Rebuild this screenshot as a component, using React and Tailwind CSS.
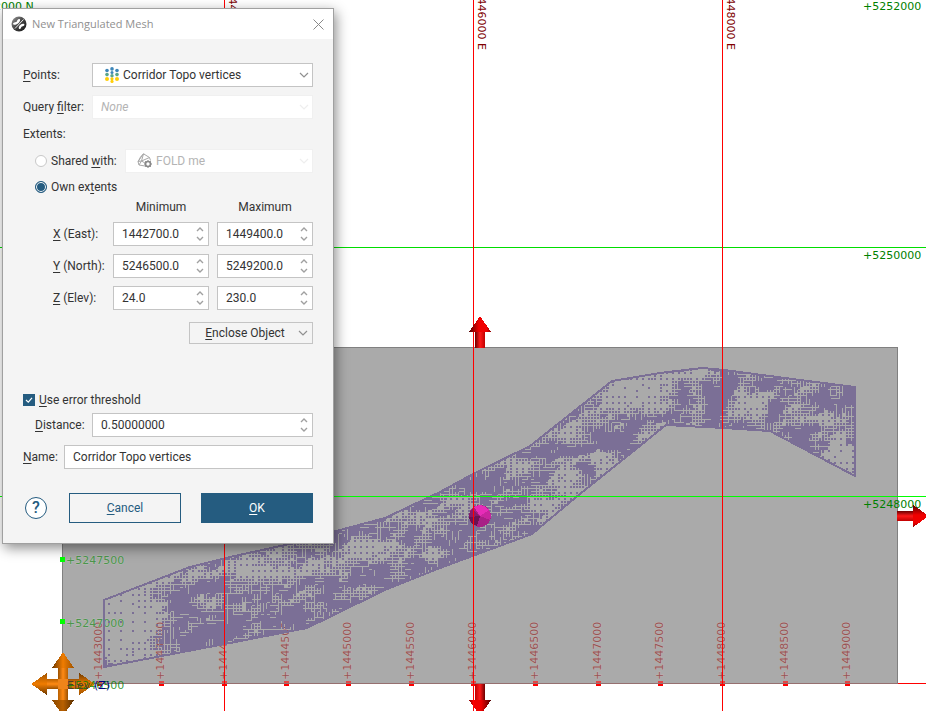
import { useId, useState } from 'react';

const EASTINGS = [1443000, 1443500, 1444000, 1444500, 1445000, 1445500, 1446000, 1446500, 1447000, 1447500, 1448000, 1448500, 1449000];

const CORRIDOR =
  '104,600 190,567 230,557 285,545 340,530 385,518 440,492 473,474 530,446 612,381 660,373 702,368 724,370 800,380 855,387 855,476 770,431 724,428 666,425 575,498 532,534 440,568 385,590 307,628 230,643 104,667';

// survey density: [cx, cy, rx, ry, weight], negative is sparse
const DENSITY = [
  [122, 625, 38, 60, -1.6],
  [105, 664, 7, 10, 1.6],
  [172, 575, 16, 12, -0.6],
  [200, 584, 28, 7, 0.9],
  [175, 603, 14, 15, 0.8],
  [190, 625, 26, 16, 0.7],
  [180, 643, 22, 9, 0.8],
  [215, 603, 18, 8, -0.5],
  [225, 635, 30, 9, 0.7],
  [250, 568, 22, 12, -1.1],
  [262, 588, 24, 7, 0.6],
  [238, 600, 14, 8, -0.5],
  [285, 618, 40, 12, 0.5],
  [300, 572, 42, 6, -0.5],
  [318, 560, 30, 5, -0.3],
  [366, 548, 22, 8, -1],
  [395, 548, 22, 6, -0.5],
  [340, 600, 50, 14, 0.5],
  [350, 532, 34, 9, 0.7],
  [425, 532, 12, 16, -0.9],
  [410, 572, 50, 12, 0.5],
  [440, 510, 24, 8, 0.1],
  [460, 530, 34, 16, 0.5],
  [490, 486, 36, 8, 0.7],
  [520, 465, 14, 8, -0.7],
  [543, 502, 18, 14, -0.7],
  [567, 484, 16, 18, -1],
  [500, 515, 24, 12, 0.4],
  [575, 428, 14, 10, -0.9],
  [550, 448, 30, 9, 0.8],
  [578, 447, 24, 6, 0.7],
  [600, 460, 10, 14, -1],
  [598, 435, 16, 7, 0.9],
  [618, 446, 22, 6, 0.8],
  [588, 472, 8, 14, 0.6],
  [635, 392, 38, 20, -1.5],
  [635, 424, 9, 14, 0.8],
  [660, 416, 26, 5, 0.9],
  [650, 436, 14, 7, -0.4],
  [690, 374, 30, 5, -1],
  [682, 400, 9, 20, 0.9],
  [697, 405, 8, 14, -0.4],
  [712, 400, 8, 22, 0.9],
  [728, 385, 12, 9, 0.6],
  [748, 405, 14, 22, -1.2],
  [768, 382, 26, 6, 0.8],
  [776, 408, 7, 14, 0.9],
  [796, 402, 11, 14, -0.9],
  [730, 423, 20, 4, 0.8],
  [825, 398, 36, 9, 0.8],
  [830, 416, 28, 5, -0.5],
  [815, 428, 44, 4, 0.5],
  [805, 442, 24, 8, 0.4],
  [850, 410, 6, 30, 0.5],
  [840, 458, 20, 20, -1.5],
];

function hash(x, y) {
  const s = Math.sin(x * 127.1 + y * 311.7) * 43758.5453;
  return s - Math.floor(s);
}

function noise(x, y) {
  const xi = Math.floor(x);
  const yi = Math.floor(y);
  const fx = x - xi;
  const fy = y - yi;
  const top = hash(xi, yi) * (1 - fx) + hash(xi + 1, yi) * fx;
  const bottom = hash(xi, yi + 1) * (1 - fx) + hash(xi + 1, yi + 1) * fx;
  return top * (1 - fy) + bottom * fy;
}

function buildPoints() {
  let d = '';
  for (let y = 366; y < 669; y += 3) {
    for (let x = 102; x < 857; x += 3) {
      let v = 0.24 + (noise(x / 11, (y + x * 0.35) / 6) - 0.5) * 1.5;
      for (const [cx, cy, rx, ry, w] of DENSITY) {
        const r = ((x - cx) / rx) ** 2 + ((y - cy) / ry) ** 2;
        if (r < 3) v += w * 0.85 * Math.exp(-r);
      }
      const i = x / 3;
      const j = y / 3;
      if (v < -0.75) {
        if (i % 4 === 0 && j % 3 === 0) d += `M${x} ${y}h2v2h-2z`;
      } else if (v < -0.2) {
        if (i % 2 === 0 && j % 2 === 0) d += `M${x} ${y}h2v2h-2z`;
      } else if (v < 0.1) {
        d += i % 2 === 0 || hash(i, j) > 0.5 ? `M${x} ${y}h2v2h-2z` : '';
      } else {
        // solid area with short gaps between the cells
        const limit = 0.85 - v;
        const gapRight = hash(Math.floor(i), Math.floor(j / 3) + 50) < limit;
        const gapBelow = hash(Math.floor(i / 3) + 90, Math.floor(j)) < limit;
        d += `M${x} ${y}h${gapRight ? 2 : 3}v${gapBelow ? 2 : 3}h${gapRight ? -2 : -3}z`;
      }
    }
  }
  return d;
}

const POINTS = buildPoints();

function RedArrow({ transform }) {
  return (
    <g transform={transform}>
      <rect x="-5" y="-17" width="10" height="17" fill="url(#redShaft)" />
      <path d="M0 -32L11 -16H-11z" fill="url(#redHead)" />
    </g>
  );
}

function OrangeArrow({ transform }) {
  return (
    <g transform={transform}>
      <rect x="-5" y="-17" width="10" height="17" fill="url(#orangeShaft)" />
      <path d="M0 -32L11 -16H-11z" fill="url(#orangeHead)" />
    </g>
  );
}

function Scene() {
  return (
    <svg
      className="block h-full w-full font-['DejaVu_Sans'] text-[11px]"
      viewBox="0 0 926 711"
      preserveAspectRatio="xMinYMin slice"
      shapeRendering="crispEdges"
    >
      <defs>
        <clipPath id="corridor">
          <polygon points={CORRIDOR} />
        </clipPath>
        <linearGradient id="redShaft">
          <stop offset="0" stopColor="#6a0000" />
          <stop offset="0.5" stopColor="#ff1a1a" />
          <stop offset="1" stopColor="#c00000" />
        </linearGradient>
        <linearGradient id="redHead">
          <stop offset="0" stopColor="#500000" />
          <stop offset="0.45" stopColor="#f00000" />
          <stop offset="0.8" stopColor="#f00000" />
          <stop offset="1" stopColor="#900000" />
        </linearGradient>
        <linearGradient id="orangeShaft">
          <stop offset="0" stopColor="#9a5000" />
          <stop offset="0.5" stopColor="#ff8a14" />
          <stop offset="1" stopColor="#b86000" />
        </linearGradient>
        <linearGradient id="orangeHead">
          <stop offset="0" stopColor="#6b3800" />
          <stop offset="0.5" stopColor="#f07c00" />
          <stop offset="1" stopColor="#a05400" />
        </linearGradient>
        <linearGradient id="orangeHeadDark">
          <stop offset="0" stopColor="#8a4800" />
          <stop offset="0.5" stopColor="#b86000" />
          <stop offset="1" stopColor="#5a3000" />
        </linearGradient>
      </defs>

      <rect x="62" y="347" width="836" height="337" fill="#aaaaaa" />
      <path d="M62.500 684V347.500H897.500V684" fill="none" stroke="#808080" />

      {/* easting labels and ticks along the bottom edge, the corridor lies over them */}
      {EASTINGS.map((value, i) => {
        const x = Math.round(99 + i * 62.33);
        return (
          <g key={value}>
            <text
              transform={`translate(${x + 3} 680) rotate(-90)`}
              fill="#985454"
              stroke="#d0b4b4"
              strokeWidth="1"
              strokeOpacity="0.6"
              paintOrder="stroke"
            >
              +{value}
            </text>
            <rect x={x - 2} y="681" width="5" height="3" fill="#e04848" />
            <rect x={x - 2} y="684" width="5" height="2" fill="#ff0000" />
          </g>
        );
      })}
      <path d="M62 683.500H898" stroke="#967070" />
      <path d="M898 683.500H2000" stroke="#ff0000" />

      <g fill="#4c944c" stroke="#c0d4c0" strokeWidth="1" strokeOpacity="0.5" paintOrder="stroke">
        <text x="66" y="564">+5247500</text>
        <text x="66" y="627">+5247000</text>
      </g>
      <path d="M60 557h5v5h-5zM60 619h5v5h-5z" fill="#00ff00" />

      <g clipPath="url(#corridor)">
        <path d={POINTS} fill="#7b6f96" />
      </g>
      <polygon points={CORRIDOR} fill="none" stroke="#7b6f96" strokeWidth="2" />

      {/* grid */}
      <path d="M0 247.500H2000" stroke="#00dd00" />
      <path d="M0 496.500H2000" stroke="#00ff00" />
      <path d="M224.500 0V711M473.500 0V711M722.500 0V711" stroke="#ff0000" />
      <g fill="#008000">
        <text x="863" y="10">+5252000</text>
        <text x="863" y="259">+5250000</text>
        <text x="863" y="508">+5248000</text>
        <text x="-27" y="10">5252000 N</text>
        <text x="-51" y="259">5250000 N</text>
        <text x="-51" y="508">5248000 N</text>
      </g>
      <g fill="#800000">
        <text textAnchor="end" transform="translate(229 50) rotate(90)">1444000 E</text>
        <text textAnchor="end" transform="translate(478 50) rotate(90)">1446000 E</text>
        <text textAnchor="end" transform="translate(727 50) rotate(90)">1448000 E</text>
      </g>

      {/* drag handles */}
      <RedArrow transform="translate(480 348)" />
      <RedArrow transform="translate(480 684) rotate(180)" />
      <RedArrow transform="translate(897 516) rotate(90)" />
      <g>
        <circle cx="480" cy="516" r="11" fill="#a81f86" />
        <path d="M480 516L474 507A11 11 0 0 1 489 510z" fill="#e62cb8" />
        <path d="M480 516L489 510A11 11 0 0 1 490 520z" fill="#c8259f" />
        <path d="M480 516L469 517A11 11 0 0 0 477 526z" fill="#6a1254" />
        <path d="M480 516L472 509A11 11 0 0 0 469 517z" fill="#861a6b" />
      </g>
      <path d="M473.500 496V711" stroke="#ff0000" />
      <OrangeArrow transform="translate(63 684) rotate(-90)" />
      <OrangeArrow transform="translate(63 684) rotate(90)" />
      <OrangeArrow transform="translate(63 684) rotate(180)" />
      <path d="M52 700H74L63 716z" fill="url(#orangeHeadDark)" />
      <OrangeArrow transform="translate(63 684)" />
      <rect x="58" y="679" width="10" height="10" fill="#f0841a" />
      <text x="66" y="689" fill="#008000" fillOpacity="0.8">+5246500</text>
      <text x="67" y="689" fill="#503c28">Elev</text>
      <text x="94" y="689" fill="#000080">(Z)</text>
    </svg>
  );
}

function Chevron({ className = 'text-[#909090]' }) {
  return (
    <svg className={`pointer-events-none absolute top-1/2 right-1 -translate-y-1/2 ${className}`} width="10" height="6" viewBox="0 0 10 6">
      <path d="M1 1L5 5L9 1" fill="none" stroke="currentColor" strokeWidth="1.2" />
    </svg>
  );
}

function SpinBox({ label, value, className, id }) {
  const [text, setText] = useState(value);

  const step = (amount) => {
    const digits = (text.split('.')[1] || '').length;
    setText((parseFloat(text) + amount).toFixed(digits));
  };

  return (
    <div className={`flex h-6 border border-[#c4c4c4] bg-white ${className}`}>
      <input
        id={id}
        aria-label={label}
        value={text}
        onChange={(e) => setText(e.target.value)}
        className="w-full min-w-0 flex-1 pl-2 outline-none"
      />
      <div className="flex w-4 flex-col items-center justify-center gap-1 text-[#a0a0a0]">
        <button type="button" aria-label="Increase" onClick={() => step(1)}>
          <svg width="8" height="5" viewBox="0 0 8 5">
            <path d="M1 4L4 1L7 4" fill="none" stroke="currentColor" strokeWidth="1.4" />
          </svg>
        </button>
        <button type="button" aria-label="Decrease" onClick={() => step(-1)}>
          <svg width="8" height="5" viewBox="0 0 8 5">
            <path d="M1 1L4 4L7 1" fill="none" stroke="currentColor" strokeWidth="1.4" />
          </svg>
        </button>
      </div>
    </div>
  );
}

function PointsIcon() {
  return (
    <svg className="pointer-events-none absolute top-1 left-3" width="16" height="16" viewBox="0 0 16 16">
      <g fill="#3d86b8">
        <circle cx="3" cy="3.500" r="1.800" />
        <circle cx="8" cy="1.900" r="1.800" />
        <circle cx="13" cy="3.500" r="1.800" />
        <circle cx="8" cy="5.500" r="1.500" />
      </g>
      <g fill="#5aa58c">
        <circle cx="3" cy="7.600" r="1.800" />
        <circle cx="8" cy="8.800" r="1.700" />
        <circle cx="13" cy="7.600" r="1.800" />
      </g>
      <g fill="#ffce0a">
        <circle cx="3" cy="12" r="2" />
        <circle cx="8" cy="11.800" r="1.600" />
        <circle cx="8" cy="14.400" r="1.600" />
        <circle cx="13" cy="12" r="2" />
      </g>
    </svg>
  );
}

function MeshIcon() {
  return (
    <svg className="pointer-events-none absolute top-1 left-3" width="15" height="15" viewBox="0 0 15 15" fill="none" stroke="#a8a8a8">
      <path d="M6.500 0.800L12.500 4.500L13.500 7.500M6.500 0.800L1 8.500L2 12L8 13M6.500 0.800L4.500 8L1 8.500M4.500 8L12.500 4.500M4.500 8L2 12M4.500 8L8 10M1.500 8L3.500 4L6.500 0.800" />
      <circle cx="11" cy="11" r="2.500" stroke="#888" strokeWidth="1.600" />
      <path d="M11 7V8.500M11 13.500V15M7 11H8.500M13.500 11H15M8.200 8.200L9.200 9.200M12.800 12.800L13.800 13.800M13.800 8.200L12.800 9.200M9.200 12.800L8.200 13.800" stroke="#888" />
    </svg>
  );
}

function AppIcon() {
  return (
    <svg width="16" height="16" viewBox="0 0 16 16">
      <defs>
        <linearGradient id="ball" x1="0" y1="0" x2="1" y2="1">
          <stop offset="0" stopColor="#999" />
          <stop offset="0.5" stopColor="#444" />
          <stop offset="1" stopColor="#111" />
        </linearGradient>
      </defs>
      <circle cx="8" cy="8" r="7.500" fill="url(#ball)" />
      <path d="M8 3C10 3 9 5.500 7.500 7C5.500 9 2 9.500 2 7.500C2.500 6 5.500 6.500 6 5.200C6.300 4 7 3 8 3z" fill="#fff" />
      <path d="M12.500 3.500L4 12.500" stroke="#fff" strokeWidth="0.900" />
      <path d="M8.500 13C7 12.500 8 10 9.500 8.800C11 7.500 13.500 7.500 13.500 9C13 10.500 10.800 9.800 10.200 11.200C9.800 12.300 9.500 13 8.500 13z" fill="#fff" />
    </svg>
  );
}

function Extent({ letter, rest, min, max }) {
  const id = useId();
  return (
    <div className="flex items-center gap-2">
      <label htmlFor={id} className="flex-1 pl-[30px] whitespace-nowrap">
        <u>{letter}</u> ({rest}):
      </label>
      <SpinBox id={id} value={min} className="w-24" />
      <SpinBox label={`${rest} maximum`} value={max} className="w-24" />
    </div>
  );
}

function MeshDialog() {
  const [own, setOwn] = useState(true);
  const [threshold, setThreshold] = useState(true);
  const [name, setName] = useState('Corridor Topo vertices');

  return (
    <form
      role="dialog"
      aria-label="New Triangulated Mesh"
      onSubmit={(e) => e.preventDefault()}
      className="absolute top-2 left-0.5 w-[332px] border border-[#a0a0a0] bg-[#f4f4f4] font-[Roboto,sans-serif] text-xs text-[#333] shadow-[2px_4px_12px_rgba(0,0,0,0.45)] [&_u]:underline-offset-2"
    >
      <header className="flex h-[30px] items-center gap-1 bg-white pr-2 pl-2">
        <AppIcon />
        <h1 className="flex-1 pl-px font-['Open_Sans',sans-serif] text-[11px] text-[#909090]">New Triangulated Mesh</h1>
        <button type="button" aria-label="Close" className="p-px">
          <svg width="11" height="11" viewBox="0 0 11 11">
            <path d="M0.500 0.500L10.500 10.500M10.500 0.500L0.500 10.500" stroke="#888" />
          </svg>
        </button>
      </header>

      <div className="px-5 pt-6 pb-5">
        <div className="flex items-center">
          <label htmlFor="points" className="w-[69px]"><u>P</u>oints:</label>
          <div className="relative flex-1">
            <select id="points" className="block h-6 w-full appearance-none border border-[#c4c4c4] bg-white pl-[30px]">
              <option>Corridor Topo vertices</option>
            </select>
            <PointsIcon />
            <Chevron />
          </div>
        </div>

        <div className="mt-2 flex items-center">
          <label htmlFor="filter" className="w-[69px] whitespace-nowrap">Query <u>f</u>ilter:</label>
          <div className="relative flex-1">
            <select id="filter" disabled className="block h-6 w-full appearance-none border border-[#f0f0f0] bg-white pl-2 text-[#b4b4b4] italic opacity-100">
              <option>None</option>
            </select>
            <Chevron className="text-[#eeeeee]" />
          </div>
        </div>

        <p className="mt-[7px]">Extents:</p>

        <div className="mt-[7px] flex items-center pl-3">
          <input
            id="shared"
            type="radio"
            name="extents"
            checked={!own}
            onChange={() => setOwn(false)}
            className="size-3 appearance-none rounded-full border border-[#c8c8c8] bg-white checked:border-[#255c80] checked:bg-[#255c80] checked:shadow-[inset_0_0_0_1px_#fff]"
          />
          <label htmlFor="shared" className="w-[75px] pl-1 whitespace-nowrap">Shared <u>w</u>ith:</label>
          <div className="relative ml-[3px] flex-1">
            <select aria-label="Shared object" disabled className="block h-6 w-full appearance-none border border-[#f0f0f0] bg-white pl-[30px] text-[#b4b4b4] opacity-100">
              <option>FOLD me</option>
            </select>
            <MeshIcon />
            <Chevron className="text-[#eeeeee]" />
          </div>
        </div>

        <div className="mt-[6px] flex items-center pl-3">
          <input
            id="own"
            type="radio"
            name="extents"
            checked={own}
            onChange={() => setOwn(true)}
            className="size-3 appearance-none rounded-full border border-[#c8c8c8] bg-white checked:border-[#255c80] checked:bg-[#255c80] checked:shadow-[inset_0_0_0_1px_#fff]"
          />
          <label htmlFor="own" className="pl-1">Own ex<u>t</u>ents</label>
        </div>

        <div className="mt-1 flex justify-end gap-2 text-center">
          <span className="w-24">Minimum</span>
          <span className="w-24">Maximum</span>
        </div>

        <div className="mt-[7px] flex flex-col gap-2">
          <Extent letter="X" rest="East" min="1442700.0" max="1449400.0" />
          <Extent letter="Y" rest="North" min="5246500.0" max="5249200.0" />
          <Extent letter="Z" rest="Elev" min="24.0" max="230.0" />
        </div>

        <div className="mt-3 flex justify-end">
          <button type="button" className="relative h-[22px] w-[124px] border border-[#c4c4c4] pr-3">
            <u>E</u>nclose Object
            <Chevron />
          </button>
        </div>

        <div className="mt-12 flex items-center">
          <span className="relative flex">
            <input
              id="threshold"
              type="checkbox"
              checked={threshold}
              onChange={(e) => setThreshold(e.target.checked)}
              className="size-3 appearance-none border border-[#255c80] bg-white checked:bg-[#255c80]"
            />
            <svg className="pointer-events-none absolute inset-0" width="12" height="12" viewBox="0 0 12 12">
              <path d="M3 6L5.300 8.200L9 3.800" fill="none" stroke="#fff" strokeWidth="1.200" />
            </svg>
          </span>
          <label htmlFor="threshold" className="pl-1"><u>U</u>se error threshold</label>
        </div>

        <div className="mt-[5px] flex items-center">
          <label htmlFor="distance" className="w-[69px] pl-3"><u>D</u>istance:</label>
          <SpinBox id="distance" value="0.50000000" className="flex-1" />
        </div>

        <div className="mt-2 flex items-center">
          <label htmlFor="name" className="w-[41px]"><u>N</u>ame:</label>
          <input
            id="name"
            value={name}
            onChange={(e) => setName(e.target.value)}
            className="h-6 min-w-0 flex-1 border border-[#c4c4c4] bg-white pl-2 outline-none"
          />
        </div>

        <div className="mt-6 flex items-center gap-5 text-[#255c80]">
          <button type="button" aria-label="Help" className="ml-0.5 size-[22px] shrink-0 rounded-full border border-[#255c80] bg-white text-base leading-5 font-medium">
            ?
          </button>
          <div className="flex flex-1 justify-end gap-5">
            <button type="button" className="h-[30px] w-28 border border-[#255c80]">
              <u>C</u>ancel
            </button>
            <button type="submit" className="h-[30px] w-28 bg-[#255c80] text-white">
              <u>O</u>K
            </button>
          </div>
        </div>
      </div>
    </form>
  );
}

export default function App() {
  return (
    <main className="relative h-screen w-full overflow-hidden bg-white">
      <Scene />
      <MeshDialog />
    </main>
  );
}
